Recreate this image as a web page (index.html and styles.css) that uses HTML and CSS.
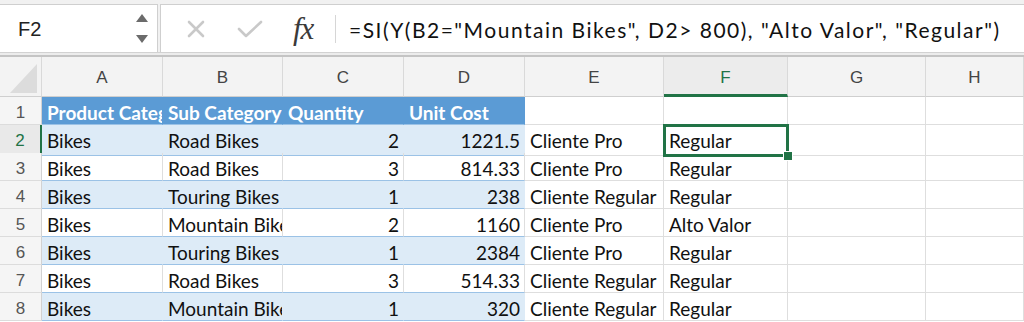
FILE: index.html
```html
<!DOCTYPE html>
<html>
<head>
	<title>Hoja de cálculo - F2</title>
	<meta charset="utf-8">
	<link rel="stylesheet" href="styles.css">
</head>
<body>
	<!-- barra de fórmulas -->
	<div class="toolbar">
		<div class="name-box">
			<span class="name-text">F2</span>
			<svg class="name-spin" width="14" height="32" viewBox="0 0 14 32">
				<path d="M1 9 L7 1 L13 9 Z" fill="#6b6b6b"/>
				<path d="M1 22 L7 30 L13 22 Z" fill="#6b6b6b"/>
			</svg>
		</div>
		<div class="formula-area">
			<div class="formula-icons">
				<svg class="icon-cancel" width="20" height="20" viewBox="0 0 20 20">
					<path d="M3 3 L17 17 M17 3 L3 17" stroke="#c9c9c9" stroke-width="2.6" stroke-linecap="round"/>
				</svg>
				<svg class="icon-ok" width="26" height="20" viewBox="0 0 26 20">
					<path d="M2 10 L9 17 L24 3" stroke="#c9c9c9" stroke-width="2.6" fill="none" stroke-linecap="round" stroke-linejoin="round"/>
				</svg>
				<i class="icon-fx">fx</i>
			</div>
			<div class="formula-sep"></div>
			<div class="formula-text">=SI(Y(B2="Mountain Bikes", D2&gt; 800), "Alto Valor", "Regular")</div>
		</div>
	</div>

	<!-- hoja -->
	<div class="sheet">
		<div class="row head-row">
			<div class="corner"></div>
			<div class="col-head">A</div>
			<div class="col-head">B</div>
			<div class="col-head">C</div>
			<div class="col-head">D</div>
			<div class="col-head">E</div>
			<div class="col-head active">F</div>
			<div class="col-head">G</div>
			<div class="col-head">H</div>
		</div>

		<div class="row">
			<div class="row-head">1</div>
			<div class="cell th">Product Category</div>
			<div class="cell th">Sub Category</div>
			<div class="cell th">Quantity</div>
			<div class="cell th">Unit Cost</div>
			<div class="cell"></div>
			<div class="cell"></div>
			<div class="cell"></div>
			<div class="cell"></div>
		</div>

		<div class="row band">
			<div class="row-head active">2</div>
			<div class="cell tb">Bikes</div>
			<div class="cell tb">Road Bikes</div>
			<div class="cell tb num">2</div>
			<div class="cell tb num">1221.5</div>
			<div class="cell">Cliente Pro</div>
			<div class="cell selected">Regular</div>
			<div class="cell"></div>
			<div class="cell"></div>
		</div>

		<div class="row">
			<div class="row-head">3</div>
			<div class="cell tb">Bikes</div>
			<div class="cell tb">Road Bikes</div>
			<div class="cell tb num">3</div>
			<div class="cell tb num">814.33</div>
			<div class="cell">Cliente Pro</div>
			<div class="cell">Regular</div>
			<div class="cell"></div>
			<div class="cell"></div>
		</div>

		<div class="row band">
			<div class="row-head">4</div>
			<div class="cell tb">Bikes</div>
			<div class="cell tb">Touring Bikes</div>
			<div class="cell tb num">1</div>
			<div class="cell tb num">238</div>
			<div class="cell">Cliente Regular</div>
			<div class="cell">Regular</div>
			<div class="cell"></div>
			<div class="cell"></div>
		</div>

		<div class="row">
			<div class="row-head">5</div>
			<div class="cell tb">Bikes</div>
			<div class="cell tb">Mountain Bikes</div>
			<div class="cell tb num">2</div>
			<div class="cell tb num">1160</div>
			<div class="cell">Cliente Pro</div>
			<div class="cell">Alto Valor</div>
			<div class="cell"></div>
			<div class="cell"></div>
		</div>

		<div class="row band">
			<div class="row-head">6</div>
			<div class="cell tb">Bikes</div>
			<div class="cell tb">Touring Bikes</div>
			<div class="cell tb num">1</div>
			<div class="cell tb num">2384</div>
			<div class="cell">Cliente Pro</div>
			<div class="cell">Regular</div>
			<div class="cell"></div>
			<div class="cell"></div>
		</div>

		<div class="row">
			<div class="row-head">7</div>
			<div class="cell tb">Bikes</div>
			<div class="cell tb">Road Bikes</div>
			<div class="cell tb num">3</div>
			<div class="cell tb num">514.33</div>
			<div class="cell">Cliente Regular</div>
			<div class="cell">Regular</div>
			<div class="cell"></div>
			<div class="cell"></div>
		</div>

		<div class="row band">
			<div class="row-head">8</div>
			<div class="cell tb">Bikes</div>
			<div class="cell tb">Mountain Bikes</div>
			<div class="cell tb num">1</div>
			<div class="cell tb num">320</div>
			<div class="cell">Cliente Regular</div>
			<div class="cell">Regular</div>
			<div class="cell"></div>
			<div class="cell"></div>
		</div>
	</div>
</body>
</html>
```

FILE: styles.css
```css
body {
	margin: 0;
	background: #fff;
	font-family: "Liberation Sans", Arial, sans-serif;
	overflow: hidden;
}

/* barra de fórmulas */
.toolbar {
	display: flex;
	height: 52px;
	background: #f1f1f1;
	border-bottom: 1px solid #d2d2d2;
}
.name-box {
	box-sizing: border-box;
	width: 158px;
	margin-top: 4px;
	background: #fff;
	border: 1px solid #cfcfcf;
	border-left: none;
	border-bottom: none;
	display: flex;
	align-items: center;
	justify-content: space-between;
	padding: 0 8px 0 18px;
}
.name-text {
	font-size: 20px;
	color: #222;
	padding-top: 2px;
}
.formula-area {
	flex: 1;
	margin: 4px 0 0 2px;
	background: #fff;
	border-top: 1px solid #cfcfcf;
	border-left: 1px solid #cfcfcf;
	display: flex;
	align-items: center;
}
.formula-icons {
	width: 174px;
	display: flex;
	align-items: center;
}
.icon-cancel {
	margin-left: 25px;
}
.icon-ok {
	margin-left: 31px;
}
.icon-fx {
	margin-left: 30px;
	font-family: "Liberation Serif", "DejaVu Serif", serif;
	font-size: 31px;
	line-height: 30px;
	color: #3a3a3a;
	letter-spacing: -1px;
}
.formula-sep {
	width: 1px;
	height: 28px;
	background: #d6d6d6;
}
.formula-text {
	padding-left: 13px;
	padding-top: 2px;
	font-family: Lato, "Open Sans", sans-serif;
	font-size: 21px;
	letter-spacing: 1.5px;
	color: #111;
	white-space: nowrap;
}

/* hoja */
.sheet {
	border-top: 2px solid #ececec;
}
.row {
	display: grid;
	grid-template-columns: 42px 121px 120px 121px 121px 139px 124px 138px 98px;
	height: 28px;
}
.head-row {
	box-sizing: border-box;
	height: 42px;
	border-top: 2px solid #c4c4c4;
	background: #f3f3f3;
}
.corner, .col-head {
	box-sizing: border-box;
	border-right: 1px solid #d9d9d9;
	border-bottom: 1px solid #cfcfcf;
}
.corner {
	position: relative;
}
.corner::after {
	content: "";
	position: absolute;
	left: 10px;
	top: 7px;
	width: 27px;
	height: 29px;
	background: #dcdcdc;
	clip-path: polygon(100% 0, 100% 100%, 0 100%);
}
.col-head {
	display: flex;
	align-items: center;
	justify-content: center;
	font-size: 17px;
	color: #444;
	padding-top: 2px;
}
.col-head.active {
	color: #217346;
	background: #ececec;
	border-bottom: 3px solid #217346;
	padding-top: 4px;
}

.row-head {
	box-sizing: border-box;
	background: #f5f5f5;
	border-right: 1px solid #d2d2d2;
	border-bottom: 1px solid #dcdcdc;
	font-size: 17px;
	color: #555;
	text-align: center;
	line-height: 28px;
	padding-top: 2px;
	overflow: hidden;
}
.row-head.active {
	color: #217346;
	background: #e9e9e9;
	border-right: 2px solid #217346;
}

.cell {
	box-sizing: border-box;
	border-right: 1px solid #dedede;
	border-bottom: 1px solid #dedede;
	padding: 2px 4px 0 5px;
	font-family: Lato, "Open Sans", sans-serif;
	font-size: 19px;
	color: #111;
	line-height: 28px;
	white-space: nowrap;
	overflow: hidden;
}
.num {
	text-align: right;
}

/* tabla con formato */
.th {
	background: #5b9bd5;
	border-right-color: #5b9bd5;
	border-bottom-color: #9bc2e6;
	color: #fff;
	font-weight: bold;
}
.tb {
	border-bottom-color: #9bc2e6;
}
.band .tb {
	background: #ddebf7;
	border-right-color: #ddebf7;
}

/* celda activa */
.selected {
	position: relative;
	overflow: visible;
	outline: 3px solid #217346;
	outline-offset: -2px;
	z-index: 1;
}
.selected::after {
	content: "";
	position: absolute;
	right: -6px;
	bottom: -6px;
	width: 8px;
	height: 8px;
	background: #217346;
	border: 1px solid #fff;
}
```
